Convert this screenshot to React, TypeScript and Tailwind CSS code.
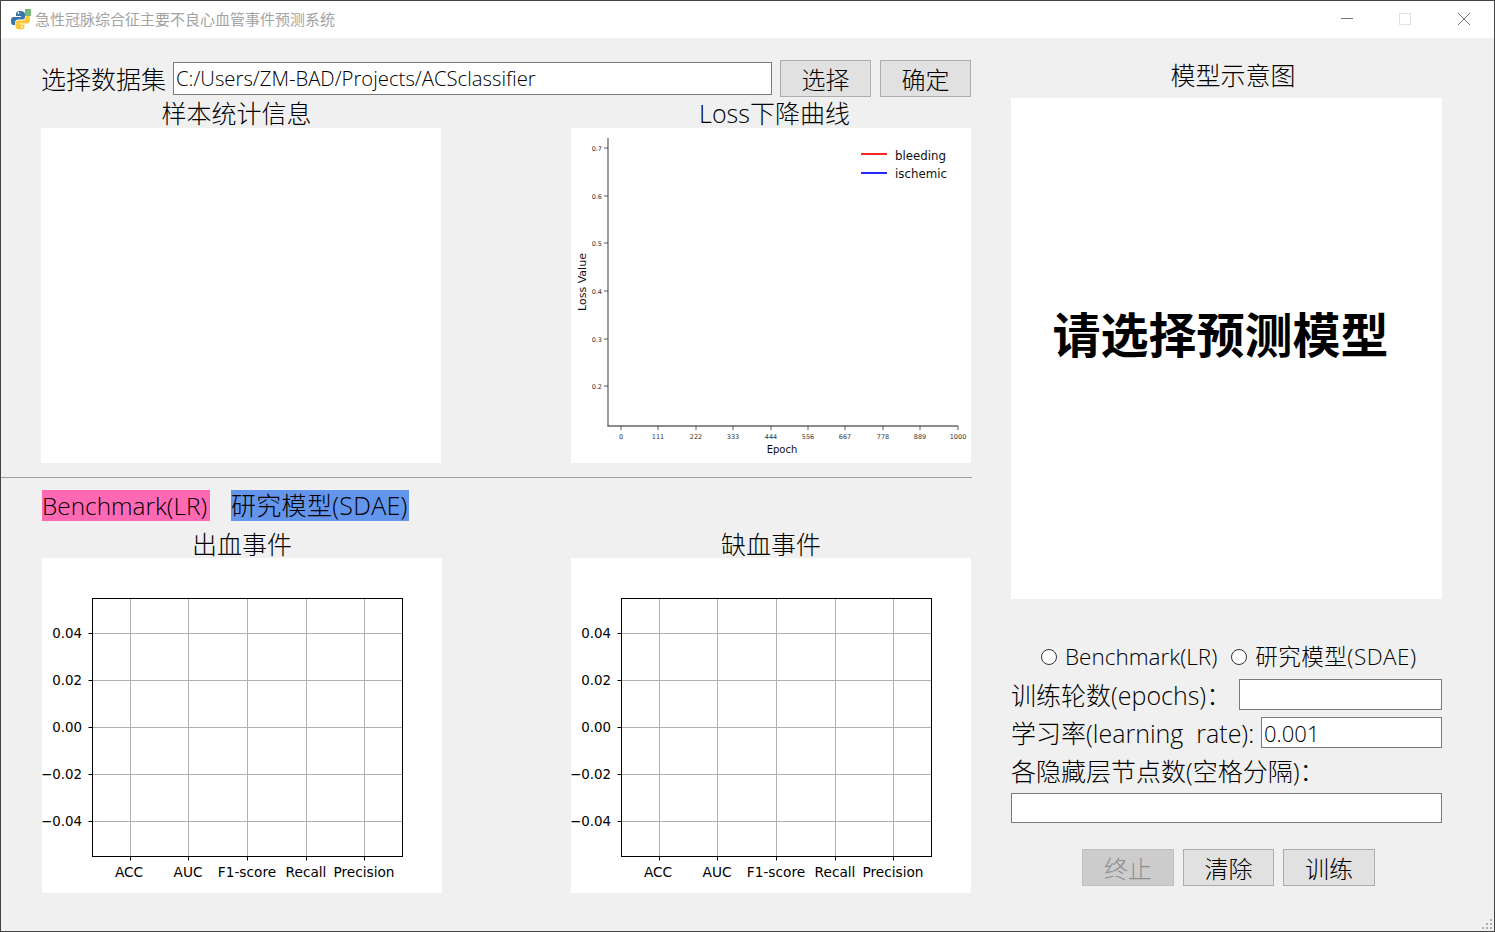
import React from 'react';

const uiFont = 'font-["Open_Sans","Noto_Sans_CJK_SC",sans-serif]';
const plotFont = '"DejaVu Sans", sans-serif';

const PythonIcon = () => (
  <svg width="22" height="22" viewBox="0 0 22 22">
    <path d="M10 2C7 2 6 3 6 5v2h5v1H3.500C1.500 8 1 9.500 1 12s.5 4 2.500 4H5v-2.500C5 11.500 6.500 10.500 8.500 10.500h4c1.500 0 2.500-1 2.500-2.500V5c0-2-2-3-5-3z" fill="#3a75a8" />
    <path d="M10.500 20.500c3 0 4-1 4-3v-2h-5v-1H17c2 0 3-1.500 3-4.500S19 6 17 6h-1.500v2c0 2-1.500 3.500-3.500 3.500H8C6.500 11.500 5.500 12.500 5.500 14v3.500c0 2 2 3 5 3z" fill="#fbc83a" />
    <rect x="15" y="0" width="6" height="7" fill="#7ab77a" />
    <circle cx="8.500" cy="4" r="0.900" fill="#fff" />
    <circle cx="12" cy="18" r="0.900" fill="#fff" />
  </svg>
);

const Field = ({ value = '', className = '' }: { value?: string; className?: string }) => (
  <input
    readOnly
    value={value}
    className={`border border-[#7a7a7a] bg-white px-[2px] font-light leading-none text-black outline-none ${className}`}
  />
);

const Btn = ({ label, disabled, className = '' }: { label: string; disabled?: boolean; className?: string }) => (
  <button
    disabled={disabled}
    className={`h-[37px] border pt-[2px] text-[24px] font-light leading-none ${
      disabled ? 'border-[#bfbfbf] bg-[#cccccc] text-[#8f8f8f]' : 'border-[#adadad] bg-[#e1e1e1] text-black'
    } ${className}`}
  >
    {label}
  </button>
);

const PanelTitle = ({ children, className = '' }: { children: React.ReactNode; className?: string }) => (
  <div className={`h-[28px] text-center text-[25px] font-light text-black ${className}`}>{children}</div>
);

const LossChart = () => {
  const yTicks: [string, number][] = [['0.7', 20], ['0.6', 68], ['0.5', 115], ['0.4', 163], ['0.3', 211], ['0.2', 258]];
  const xTicks: [string, number][] = [
    ['0', 50], ['111', 87], ['222', 125], ['333', 162], ['444', 200],
    ['556', 237], ['667', 274], ['778', 312], ['889', 349], ['1000', 387],
  ];
  return (
    <svg width="400" height="335" className="block bg-white" style={{ fontFamily: plotFont }}>
      <line x1="37" y1="10" x2="37" y2="298.500" stroke="#666" strokeWidth="1.300" />
      <line x1="36.500" y1="298" x2="387" y2="298" stroke="#666" strokeWidth="1.300" />
      {yTicks.map(([t, y]) => (
        <g key={t}>
          <line x1="33" y1={y} x2="37" y2={y} stroke="#333" strokeWidth="0.800" />
          <text x="31" y={y + 2.500} textAnchor="end" fontSize="6.500" fill="#333">{t}</text>
        </g>
      ))}
      {xTicks.map(([t, x]) => (
        <g key={t}>
          <line x1={x} y1="298" x2={x} y2="302" stroke="#333" strokeWidth="0.800" />
          <text x={x} y="311" textAnchor="middle" fontSize="6.500" fill="#333">{t}</text>
        </g>
      ))}
      <line x1="290" y1="26" x2="316" y2="26" stroke="#ff0000" strokeWidth="1.700" />
      <line x1="290" y1="45" x2="316" y2="45" stroke="#0000ff" strokeWidth="1.700" />
      <text x="324" y="32" fontSize="11.800" fill="#111">bleeding</text>
      <text x="324" y="50" fontSize="11.800" fill="#111">ischemic</text>
      <text x="211" y="325" textAnchor="middle" fontSize="10" fill="#111">Epoch</text>
      <text transform="translate(15 154) rotate(-90)" textAnchor="middle" fontSize="11" fill="#111">Loss Value</text>
    </svg>
  );
};

const EventChart = () => {
  const rows: [string, number][] = [['0.04', 75.5], ['0.02', 122.5], ['0.00', 169.5], ['−0.02', 216.5], ['−0.04', 263.5]];
  const cols: [string, number, number][] = [
    ['ACC', 88.5, 87], ['AUC', 146.5, 146], ['F1-score', 205.5, 205], ['Recall', 264.5, 264], ['Precision', 322.5, 322],
  ];
  return (
    <svg width="400" height="335" className="block bg-white" style={{ fontFamily: plotFont }}>
      {rows.map(([t, y]) => (
        <g key={t}>
          <line x1="50.500" y1={y} x2="360.500" y2={y} stroke="#b0b0b0" strokeWidth="1" />
          <line x1="46.500" y1={y} x2="50.500" y2={y} stroke="#000" strokeWidth="1" />
          <text x="40" y={y + 4.500} textAnchor="end" fontSize="13.400" fill="#000">{t}</text>
        </g>
      ))}
      {cols.map(([t, x, tx]) => (
        <g key={t}>
          <line x1={x} y1="40.500" x2={x} y2="298.500" stroke="#b0b0b0" strokeWidth="1" />
          <line x1={x} y1="298.500" x2={x} y2="302.500" stroke="#000" strokeWidth="1" />
          <text x={tx} y="319" textAnchor="middle" fontSize="13.700" fill="#000">{t}</text>
        </g>
      ))}
      <rect x="50.500" y="40.500" width="310" height="258" fill="none" stroke="#000" strokeWidth="1" />
    </svg>
  );
};

const Radio = ({ label, className = '', textClass = '' }: { label: string; className?: string; textClass?: string }) => (
  <label className={`flex shrink-0 items-center whitespace-nowrap ${className}`}>
    <input type="radio" name="model" className="h-4 w-4 appearance-none rounded-full border border-[#333] bg-white" />
    <span className={`ml-2 text-[22.5px] font-light leading-none text-black ${textClass}`}>{label}</span>
  </label>
);

export default function App() {
  return (
    <div className={`flex h-[932px] w-[1495px] flex-col overflow-hidden border border-[#444] bg-[#f0f0f0] ${uiFont}`}>
      {/* Title bar */}
      <div className="flex h-[37px] shrink-0 items-center bg-white">
        <div className="ml-[9px]"><PythonIcon /></div>
        <span className="ml-[3px] text-[15px] leading-none text-[#a3a3a3]">急性冠脉综合征主要不良心血管事件预测系统</span>
        <div className="ml-auto flex items-center pb-[2px]">
          <span className="mr-[46px] h-px w-[12px] bg-[#777]" />
          <span className="mr-[47px] h-[12px] w-[12px] border border-[#e2e2e2]" />
          <svg width="12" height="12" viewBox="0 0 12 12" className="mr-[24px]">
            <path d="M0 0 12 12M12 0 0 12" stroke="#777" strokeWidth="1" />
          </svg>
        </div>
      </div>

      <div className="relative flex flex-1">
        {/* Left column */}
        <div className="w-[971px] shrink-0 pt-[22px]">
          <div className="ml-[40px] flex h-[37px] items-center">
            <span className="w-[132px] pt-[2px] text-[25px] font-light leading-none text-black">选择数据集</span>
            <Field value="C:/Users/ZM-BAD/Projects/ACSclassifier" className="h-[33px] w-[599px] pb-[2px] text-[20.3px]" />
            <Btn label="选择" className="ml-2 w-[91px]" />
            <Btn label="确定" className="ml-[9px] w-[91px]" />
          </div>

          <div className="ml-[40px] mr-px mt-[3px] flex justify-between">
            <div className="w-[400px]">
              <PanelTitle className="pr-[9px] leading-[26px]">样本统计信息</PanelTitle>
              <div className="h-[335px] bg-white" />
            </div>
            <div className="w-[400px]">
              <PanelTitle className="pl-[7px] leading-[26px]">Loss下降曲线</PanelTitle>
              <LossChart />
            </div>
          </div>

          <div className="mt-[14px] h-px bg-[#a0a0a0]" />

          <div className="ml-[41px] mt-[12px] flex h-[31px]">
            <span className="flex w-[168px] items-center whitespace-nowrap bg-[#ff69b4] pt-px text-[24.4px] font-light leading-none text-black">Benchmark(LR)</span>
            <span className="ml-[21px] flex w-[178px] items-center whitespace-nowrap bg-[#6495ed] text-[25px] font-light leading-none tracking-[0.3px] text-black">研究模型(SDAE)</span>
          </div>

          <div className="ml-[41px] mt-[9px] flex w-[929px] justify-between">
            <div className="w-[400px]">
              <PanelTitle className="leading-[28px]">出血事件</PanelTitle>
              <EventChart />
            </div>
            <div className="w-[400px]">
              <PanelTitle className="leading-[28px]">缺血事件</PanelTitle>
              <EventChart />
            </div>
          </div>
        </div>

        {/* Right column */}
        <div className="ml-[39px] w-[431px] shrink-0 pt-[23px]">
          <div className="h-[37px] pl-[13px] text-center text-[25px] font-light leading-[28px] text-black">模型示意图</div>
          <div className="flex h-[501px] items-start justify-center bg-white pt-[208px]">
            <span className="mr-[12px] text-[48px] font-bold leading-[58px] text-black">请选择预测模型</span>
          </div>

          <div className="ml-[30px] mt-[44px] flex h-[28px] items-center">
            <Radio label="Benchmark(LR)" />
            <Radio label="研究模型(SDAE)" className="ml-[14px]" textClass="tracking-[0.5px]" />
          </div>

          <div className="mt-[8px] flex h-[31px] items-center justify-between">
            <span className="pt-[2px] text-[25px] font-light leading-none text-black">训练轮数(epochs)：</span>
            <Field className="h-[31px] w-[203px]" />
          </div>
          <div className="mt-[7px] flex h-[31px] items-center justify-between">
            <span className="whitespace-pre pt-[2px] text-[25px] font-light leading-none text-black">学习率(learning  rate):</span>
            <Field value="0.001" className="h-[31px] w-[181px] text-[22px]" />
          </div>
          <div className="mt-[8px] h-[30px] text-[25px] font-light leading-[30px] text-black">各隐藏层节点数(空格分隔)：</div>
          <Field className="mt-[7px] block h-[30px] w-[431px]" />

          <div className="ml-[71px] mt-[26px] flex">
            <Btn label="终止" disabled className="w-[92px]" />
            <Btn label="清除" className="ml-[9px] w-[91px]" />
            <Btn label="训练" className="ml-[9px] w-[92px]" />
          </div>
        </div>

        {/* Resize grip */}
        <svg width="12" height="12" viewBox="0 0 12 12" className="absolute bottom-0 right-0" fill="#b0b0b0">
          <rect x="8" y="0" width="2" height="2" />
          <rect x="4" y="4" width="2" height="2" />
          <rect x="8" y="4" width="2" height="2" />
          <rect x="0" y="8" width="2" height="2" />
          <rect x="4" y="8" width="2" height="2" />
          <rect x="8" y="8" width="2" height="2" />
        </svg>
      </div>
    </div>
  );
}
